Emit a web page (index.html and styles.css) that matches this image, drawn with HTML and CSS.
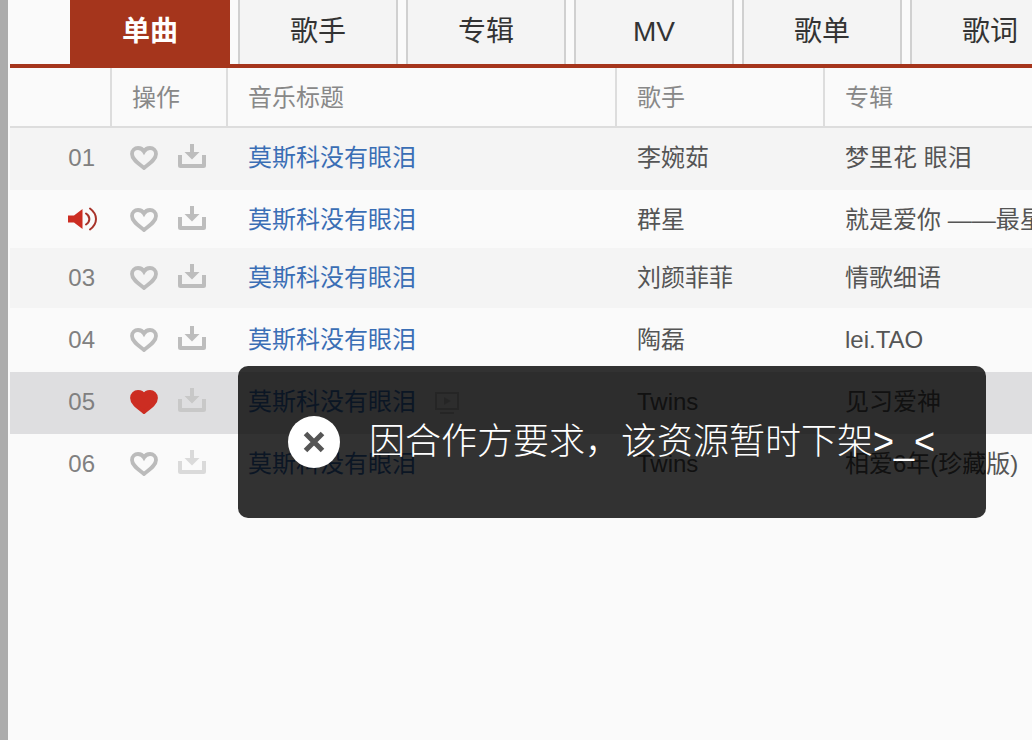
FILE: index.html
```html
<!DOCTYPE html>
<html lang="zh-CN">
<head>
  <meta charset="UTF-8" />
  <title>搜索结果 - 单曲</title>
  <link rel="stylesheet" href="styles.css">
</head>
<body>
  <svg class="defs" width="0" height="0">
    <symbol id="heart" viewBox="0 0 28 24">
      <path d="M14 22C8.5 17.5 2 13.5 2 8C2 4.5 4.8 2 8 2C10.5 2 12.8 3.4 14 5.5C15.2 3.4 17.5 2 20 2C23.2 2 26 4.5 26 8C26 13.5 19.5 17.5 14 22Z" />
    </symbol>
    <symbol id="download" viewBox="0 0 28 24">
      <path d="M12 0h4v8h5.5L14 15.5 6.5 8H12z" />
      <path d="M0 11h4v9h20v-9h4v10.5a2.5 2.5 0 0 1-2.5 2.5h-23A2.5 2.5 0 0 1 0 21.5z" />
    </symbol>
  </svg>

  <!-- Left scrollbar strip -->
  <div class="strip"></div>

  <div class="main">
    <!-- Tabs -->
    <div class="tabs">
      <a class="tab active">单曲</a>
      <a class="tab">歌手</a>
      <a class="tab">专辑</a>
      <a class="tab">MV</a>
      <a class="tab">歌单</a>
      <a class="tab">歌词</a>
    </div>

    <!-- Song table -->
    <table class="songs">
      <colgroup>
        <col class="col-num">
        <col class="col-ops">
        <col class="col-title">
        <col class="col-singer">
        <col class="col-album">
      </colgroup>
      <thead>
        <tr>
          <th></th>
          <th>操作</th>
          <th>音乐标题</th>
          <th>歌手</th>
          <th>专辑</th>
        </tr>
      </thead>
      <tbody>
        <tr class="odd">
          <td class="num">01</td>
          <td class="ops">
            <div class="ops-icons">
              <svg class="heart"><use href="#heart" /></svg>
              <svg class="download"><use href="#download" /></svg>
            </div>
          </td>
          <td class="title"><a>莫斯科没有眼泪</a></td>
          <td>李婉茹</td>
          <td>梦里花 眼泪</td>
        </tr>
        <tr class="short">
          <td class="num">
            <svg class="speaker" viewBox="0 0 29 24">
              <path class="cone" d="M0 8.500h6L14.500 2v20L6 15.500H0z" />
              <path class="wave" d="M18 6.500c4.500 3 4.500 8 0 11" />
              <path class="wave" d="M22 1.500c8 6 8 15 0 21" />
            </svg>
          </td>
          <td class="ops">
            <div class="ops-icons">
              <svg class="heart"><use href="#heart" /></svg>
              <svg class="download"><use href="#download" /></svg>
            </div>
          </td>
          <td class="title"><a>莫斯科没有眼泪</a></td>
          <td>群星</td>
          <td>就是爱你 ——最星光</td>
        </tr>
        <tr class="odd third">
          <td class="num">03</td>
          <td class="ops">
            <div class="ops-icons">
              <svg class="heart"><use href="#heart" /></svg>
              <svg class="download"><use href="#download" /></svg>
            </div>
          </td>
          <td class="title"><a>莫斯科没有眼泪</a></td>
          <td>刘颜菲菲</td>
          <td>情歌细语</td>
        </tr>
        <tr>
          <td class="num">04</td>
          <td class="ops">
            <div class="ops-icons">
              <svg class="heart"><use href="#heart" /></svg>
              <svg class="download"><use href="#download" /></svg>
            </div>
          </td>
          <td class="title"><a>莫斯科没有眼泪</a></td>
          <td>陶磊</td>
          <td class="latin">lei.TAO</td>
        </tr>
        <tr class="hover">
          <td class="num">05</td>
          <td class="ops">
            <div class="ops-icons">
              <svg class="heart liked"><use href="#heart" /></svg>
              <svg class="download off"><use href="#download" /></svg>
            </div>
          </td>
          <td class="title">
            <a>莫斯科没有眼泪</a>
            <svg class="mv" viewBox="0 0 24 22">
              <path class="mv-frame" d="M1 1h22v16H1z" />
              <path class="mv-play" d="M9 5l7 4-7 4z" />
              <path class="mv-frame" d="M5 21h14" />
            </svg>
          </td>
          <td class="latin">Twins</td>
          <td>见习爱神</td>
        </tr>
        <tr>
          <td class="num">06</td>
          <td class="ops">
            <div class="ops-icons">
              <svg class="heart"><use href="#heart" /></svg>
              <svg class="download faint"><use href="#download" /></svg>
            </div>
          </td>
          <td class="title"><a>莫斯科没有眼泪</a></td>
          <td class="latin">Twins</td>
          <td>相爱6年(珍藏版)</td>
        </tr>
      </tbody>
    </table>
  </div>

  <!-- Toast -->
  <div class="toast">
    <span class="toast-icon">
      <svg width="22" height="22" viewBox="0 0 22 22">
        <path d="M2.500 2.500l17 17M19.500 2.500l-17 17" />
      </svg>
    </span>
    <span class="toast-text">因合作方要求，该资源暂时下架&gt;_&lt;</span>
  </div>
</body>
</html>
```

FILE: styles.css
```css
html, body {
  height: 100%;
}

body {
  margin: 0;
  display: flex;
  overflow: hidden;
  background: #fafafa;
  font-family: "Liberation Sans", "Noto Sans CJK SC", sans-serif;
  color: #555555;
}

.defs {
  position: absolute;
}

.strip {
  flex: none;
  width: 8px;
  margin-right: 2px;
  background: #acacac;
}

.main {
  flex: 1;
  min-width: 0;
}

/* Tabs */
.tabs {
  display: flex;
  gap: 8px;
  height: 64px;
  padding-left: 60px;
  border-bottom: 4px solid #a5351c;
}

.tab {
  flex: none;
  box-sizing: border-box;
  width: 160px;
  line-height: 64px;
  text-align: center;
  font-size: 28px;
  color: #333333;
  background: #f4f4f4;
  border-left: 2px solid #d0d0d0;
  border-right: 2px solid #d0d0d0;
}

.tab.active {
  color: #ffffff;
  font-weight: 700;
  background: #a5351c;
  border-color: #a5351c;
}

/* Song table */
.songs {
  width: 1022px;
  border-collapse: collapse;
  table-layout: fixed;
  font-size: 24px;
}

.col-num { width: 101px; }
.col-ops { width: 116px; }
.col-title { width: 389px; }
.col-singer { width: 208px; }

.songs th {
  height: 55px;
  padding: 0 0 3px 20px;
  text-align: left;
  font-weight: 400;
  color: #888888;
  border-bottom: 2px solid #dddddd;
  border-left: 2px solid #dddddd;
}

.songs th:first-child {
  border-left: none;
}

.songs td {
  height: 54px;
  padding: 0 0 8px 21px;
  white-space: nowrap;
  overflow: hidden;
}

.songs tr.short td {
  padding-bottom: 4px;
}

.songs tr.odd {
  background: #f4f4f4;
}

/* this row's band stops a little short of the next row */
.songs tr.third td {
  box-shadow: inset 0 -2px 0 #fafafa;
}

.songs tr.hover {
  background: #dedee0;
}

.songs td.latin {
  height: 56px;
  padding-bottom: 2px;
}

.songs td.num {
  height: 58px;
  padding: 0 16px 2px 0;
  text-align: right;
  color: #808080;
  font-size: 24px;
}

.songs tr.short td.num {
  height: 58px;
  padding-bottom: 0;
}

.songs td.ops {
  height: 58px;
  padding: 0 0 4px 19px;
}

.songs tr.short td.ops {
  padding-bottom: 0;
}

.ops-icons {
  display: flex;
  align-items: center;
  gap: 20px;
}

.ops-icons svg {
  flex: none;
  width: 28px;
  height: 24px;
}

.heart {
  margin-top: 2px;
  fill: none;
  stroke: #bbbbbb;
  stroke-width: 3.800px;
  overflow: visible;
}

.heart.liked {
  fill: #cc2d22;
  stroke: #cc2d22;
}

.download {
  margin-bottom: 2px;
  fill: #bdbdbd;
}

.download.off {
  fill: #c8c8c8;
}

.download.faint {
  fill: #dadada;
}

.speaker {
  display: block;
  width: 29px;
  height: 24px;
  margin: 0 -2px 0 auto;
}

.cone {
  fill: #cc2d22;
}

.wave {
  fill: none;
  stroke: #a8332a;
  stroke-width: 2px;
  stroke-linecap: round;
}

.title a {
  color: #3a6eb5;
}

.mv {
  width: 24px;
  height: 22px;
  margin-left: 12px;
  vertical-align: middle;
}

.mv-frame {
  fill: none;
  stroke: #bbbbbb;
  stroke-width: 2px;
}

.mv-play {
  fill: #bbbbbb;
}

/* Toast */
.toast {
  position: absolute;
  left: 238px;
  top: 366px;
  box-sizing: border-box;
  width: 748px;
  height: 152px;
  padding-left: 50px;
  display: flex;
  align-items: center;
  gap: 29px;
  border-radius: 10px;
  background: rgba(0, 0, 0, 0.8);
}

.toast-icon {
  flex: none;
  display: flex;
  align-items: center;
  justify-content: center;
  width: 52px;
  height: 52px;
  border-radius: 50%;
  background: #ffffff;
}

.toast-icon path {
  fill: none;
  stroke: #555555;
  stroke-width: 5px;
}

.toast-text {
  padding-bottom: 8px;
  font-size: 36px;
  font-weight: 300;
  color: #ffffff;
  white-space: nowrap;
}
```
